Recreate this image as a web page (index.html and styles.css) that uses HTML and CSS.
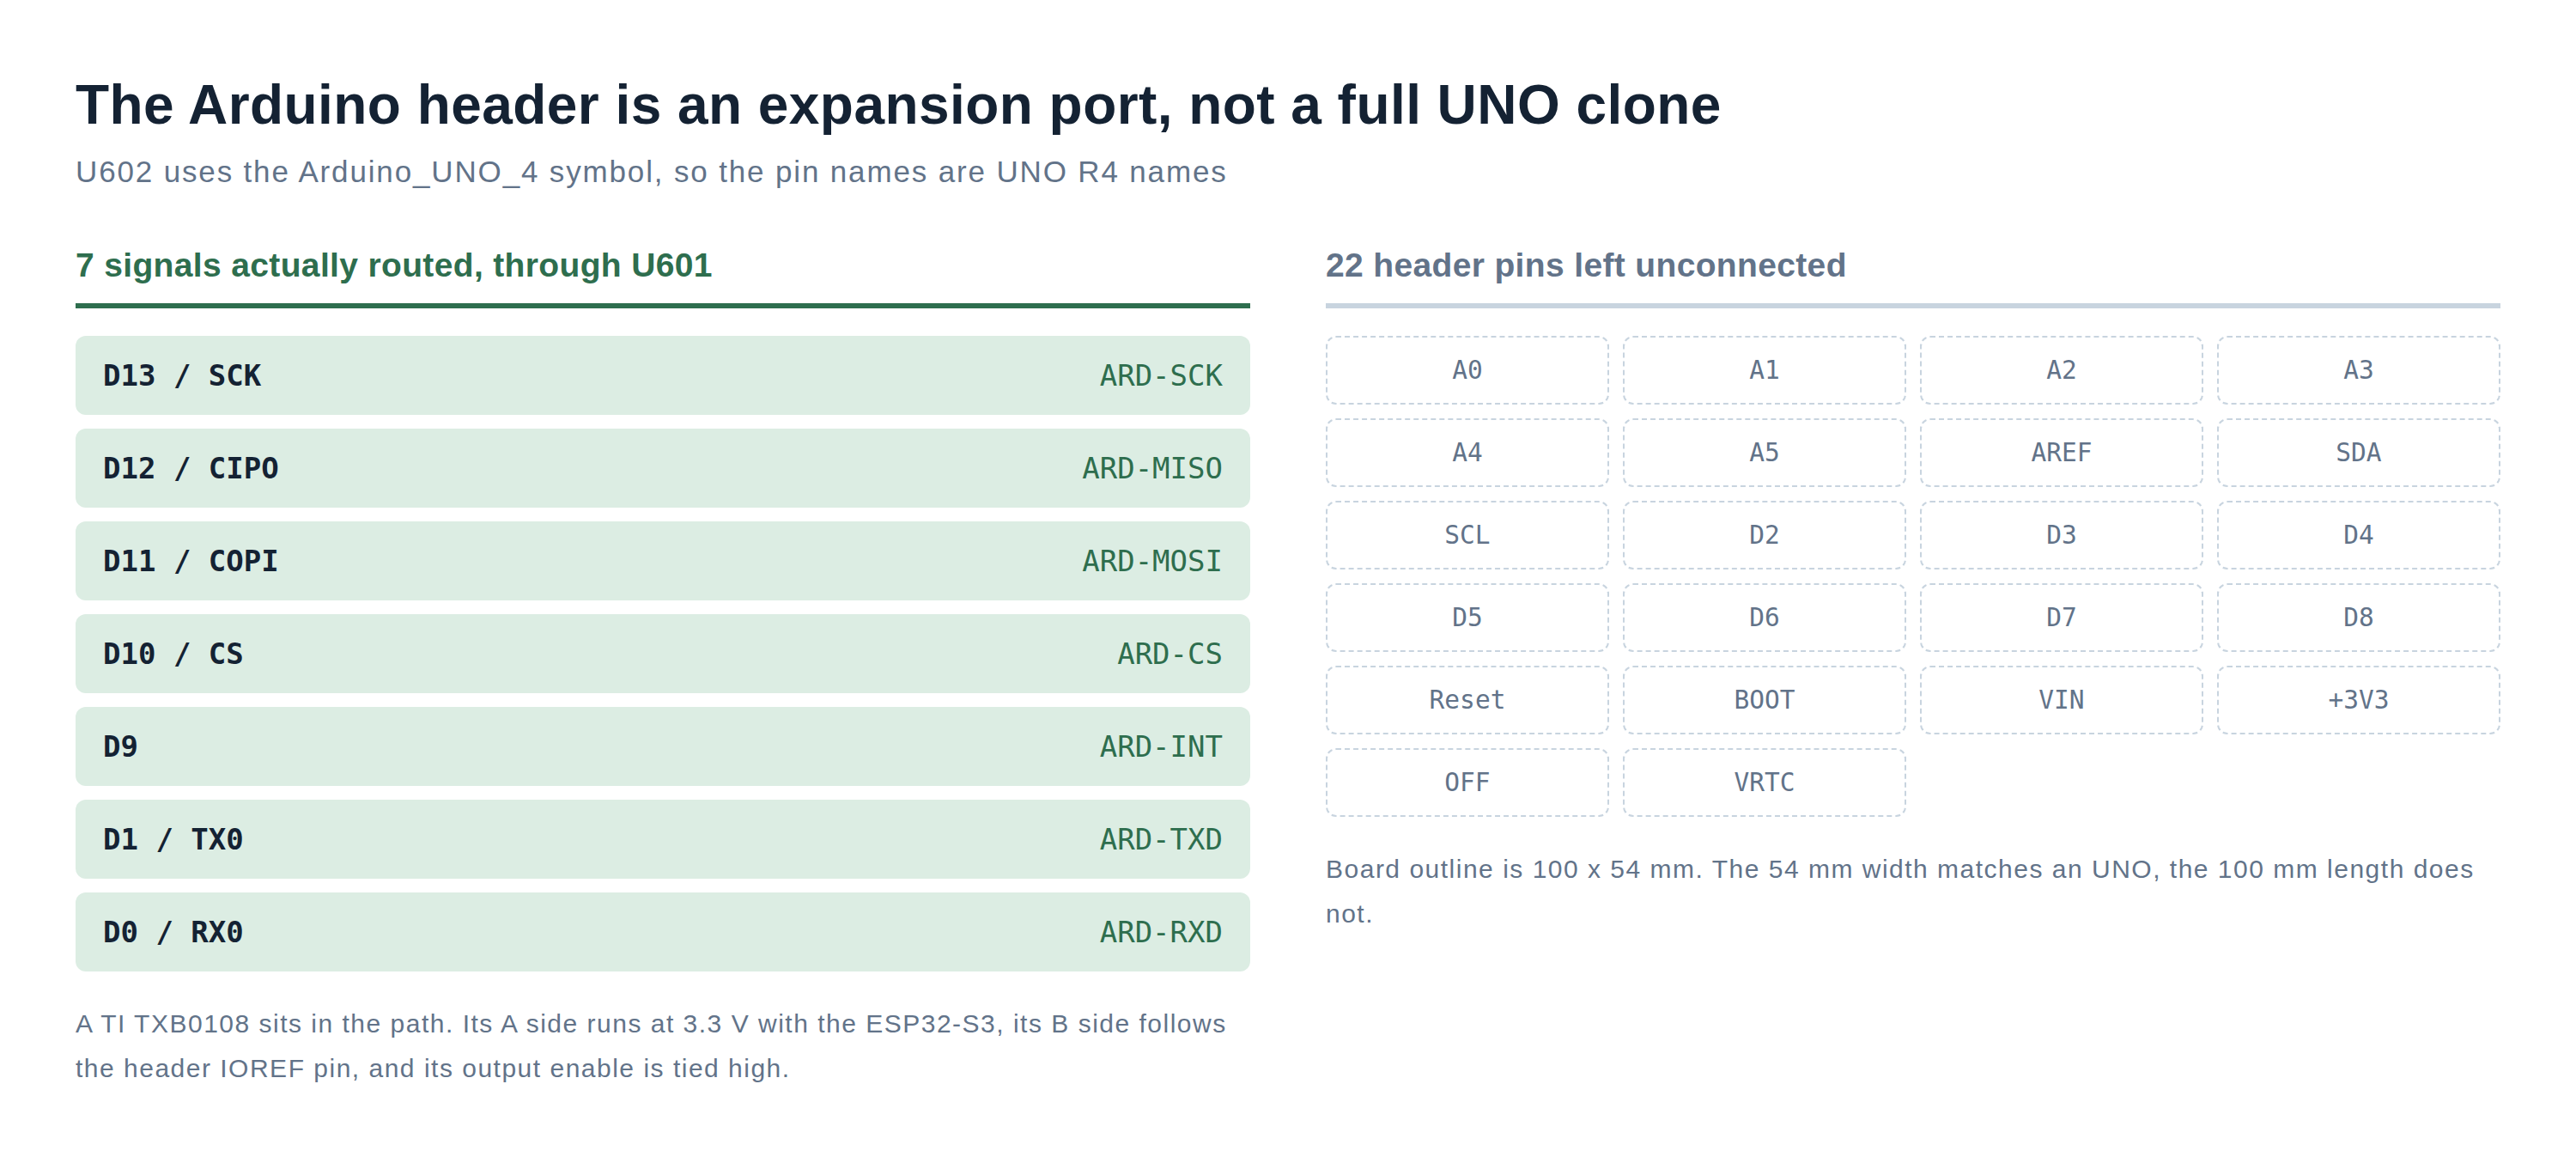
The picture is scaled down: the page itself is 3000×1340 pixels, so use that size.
FILE: index.html
```html
<!DOCTYPE html>
<html lang="en">
<head>
<meta charset="utf-8">
<title>Arduino header</title>
<link rel="stylesheet" href="styles.css">
</head>
<body>
<main class="page">
  <h1 class="title">The Arduino header is an expansion port, not a full UNO clone</h1>
  <p class="subtitle">U602 uses the Arduino_UNO_4 symbol, so the pin names are UNO R4 names</p>
  <div class="columns">
    <section class="col">
      <h2 class="heading heading-routed">7 signals actually routed, through U601</h2>
      <ul class="routes">
        <li class="route"><span class="pin">D13 / SCK</span><span class="net">ARD-SCK</span></li>
        <li class="route"><span class="pin">D12 / CIPO</span><span class="net">ARD-MISO</span></li>
        <li class="route"><span class="pin">D11 / COPI</span><span class="net">ARD-MOSI</span></li>
        <li class="route"><span class="pin">D10 / CS</span><span class="net">ARD-CS</span></li>
        <li class="route"><span class="pin">D9</span><span class="net">ARD-INT</span></li>
        <li class="route"><span class="pin">D1 / TX0</span><span class="net">ARD-TXD</span></li>
        <li class="route"><span class="pin">D0 / RX0</span><span class="net">ARD-RXD</span></li>
      </ul>
      <p class="note">A TI TXB0108 sits in the path. Its A side runs at 3.3 V with the ESP32-S3, its B side follows the header IOREF pin, and its output enable is tied high.</p>
    </section>
    <section class="col">
      <h2 class="heading heading-free">22 header pins left unconnected</h2>
      <ul class="pins">
        <li class="cell">A0</li>
        <li class="cell">A1</li>
        <li class="cell">A2</li>
        <li class="cell">A3</li>
        <li class="cell">A4</li>
        <li class="cell">A5</li>
        <li class="cell">AREF</li>
        <li class="cell">SDA</li>
        <li class="cell">SCL</li>
        <li class="cell">D2</li>
        <li class="cell">D3</li>
        <li class="cell">D4</li>
        <li class="cell">D5</li>
        <li class="cell">D6</li>
        <li class="cell">D7</li>
        <li class="cell">D8</li>
        <li class="cell">Reset</li>
        <li class="cell">BOOT</li>
        <li class="cell">VIN</li>
        <li class="cell">+3V3</li>
        <li class="cell">OFF</li>
        <li class="cell">VRTC</li>
      </ul>
      <p class="note">Board outline is 100 x 54 mm. The 54 mm width matches an UNO, the 100 mm length does not.</p>
    </section>
  </div>
</main>
</body>
</html>
```

FILE: styles.css
```css
* { box-sizing: border-box; }
html, body { margin: 0; padding: 0; background: #ffffff; }
body { font-family: "Liberation Sans", Arial, sans-serif; }

.page {
  padding: 82px 88px 40px 88px;
}

.title {
  margin: 0;
  font-size: 64px;
  line-height: 80px;
  font-weight: 700;
  letter-spacing: 0.45px;
  color: #142233;
}

.subtitle {
  margin: 16px 0 0 0;
  font-size: 35px;
  line-height: 44px;
  letter-spacing: 1.85px;
  color: #627389;
}

.columns {
  margin-top: 64px;
  display: grid;
  grid-template-columns: 1fr 1fr;
  column-gap: 88px;
}

.col { min-width: 0; }

.heading {
  margin: 0;
  font-size: 39px;
  line-height: 46px;
  font-weight: 700;
  letter-spacing: 0.35px;
  padding-bottom: 21px;
  border-bottom: 6px solid;
}
.heading-routed { color: #2e6e4e; border-color: #2e6e4e; }
.heading-free { color: #627389; border-color: #c8d4df; }

.routes {
  list-style: none;
  margin: 32px 0 0 0;
  padding: 0;
  display: flex;
  flex-direction: column;
  gap: 16px;
}

.route {
  height: 92px;
  display: flex;
  align-items: center;
  justify-content: space-between;
  padding: 0 32px;
  background: #dcede3;
  border-radius: 12px;
  font-family: "DejaVu Sans Mono", monospace;
  font-size: 34px;
}
.pin { font-weight: 700; color: #142233; }
.net { color: #2e6e4e; }

.pins {
  list-style: none;
  margin: 32px 0 0 0;
  padding: 0;
  display: grid;
  grid-template-columns: repeat(4, 1fr);
  gap: 16px;
}

.cell {
  height: 80px;
  display: flex;
  align-items: center;
  justify-content: center;
  border: 2px dashed #c8d4df;
  border-radius: 12px;
  font-family: "DejaVu Sans Mono", monospace;
  font-size: 29.5px;
  color: #627389;
}

.note {
  margin: 35px 0 0 0;
  font-size: 30px;
  line-height: 52px;
  letter-spacing: 1.5px;
  color: #627389;
}
```
